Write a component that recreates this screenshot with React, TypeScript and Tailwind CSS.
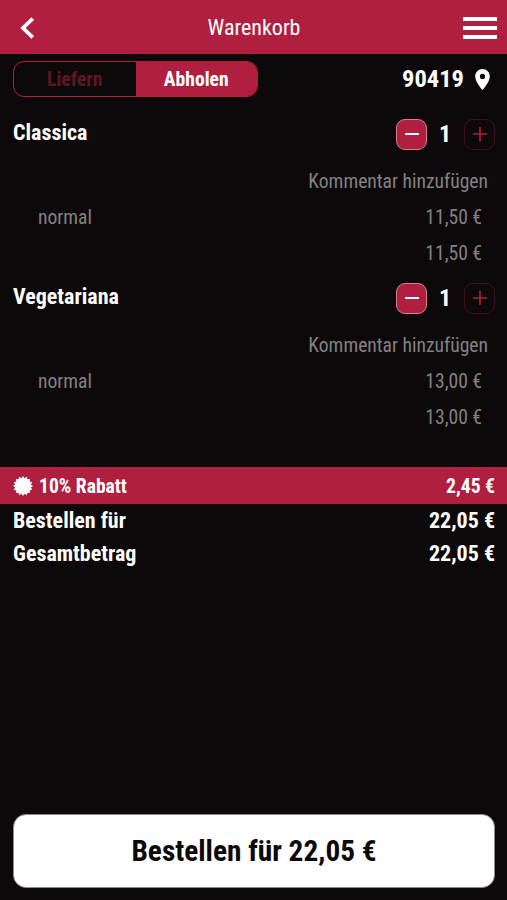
import React, { useState } from "react";
import { MdLocationOn } from "react-icons/md";

type CartItem = {
  id: number;
  name: string;
  size: string;
  count: number;
  price: number;
};

const CART: CartItem[] = [
  { id: 1, name: "Classica", size: "normal", count: 1, price: 11.5 },
  { id: 2, name: "Vegetariana", size: "normal", count: 1, price: 13 },
];

const DISCOUNT = 0.1;

const euro = (value: number) => `${value.toFixed(2).replace(".", ",")} €`;

// Zacken des Rabatt-Siegels
const sealPoints = Array.from({ length: 32 }, (_, i) => {
  const r = i % 2 === 0 ? 10 : 8;
  const a = (Math.PI * i) / 16;
  return `${(10 + r * Math.sin(a)).toFixed(2)},${(10 - r * Math.cos(a)).toFixed(2)}`;
}).join(" ");

function Header() {
  return (
    <header className="h-[54px] shrink-0 bg-[#b11f40] flex items-center pl-5 pr-[10px]">
      <button aria-label="Zurück" className="w-[34px] pt-0.5">
        <svg width="14" height="22" viewBox="0 0 14 22" fill="none" stroke="currentColor" strokeWidth="3.8">
          <path d="M12.8 1.5 3 11l9.8 9.5" />
        </svg>
      </button>
      <h1 className="flex-1 pr-[9px] text-center text-[22px] leading-none font-normal pt-px">Warenkorb</h1>
      <button aria-label="Menü" className="w-[34px] flex flex-col gap-[5px] pt-0.5">
        <span className="h-1 bg-white" />
        <span className="h-1 bg-white" />
        <span className="h-1 bg-white" />
      </button>
    </header>
  );
}

function CartRow({ item }: { item: CartItem }) {
  return (
    <section className="h-[164px] text-[19.6px] text-[#838182]">
      <div className="flex items-center h-9 mb-[11px] pl-[13px] pr-3">
        <h2 className="flex-1 text-[22px] leading-none font-bold text-white pb-0.5">{item.name}</h2>
        <button aria-label="Weniger" className="size-[31px] rounded-[9px] bg-[#b11f40] border border-[#d27c8e] text-white flex items-center justify-center">
          <svg width="14" height="14" viewBox="0 0 14 14" stroke="currentColor" strokeWidth="2">
            <path d="M0 7h14" />
          </svg>
        </button>
        <span className="w-[37px] text-center text-[24px] leading-none font-bold text-white pr-px">{item.count}</span>
        <button aria-label="Mehr" className="size-[31px] rounded-[9px] border border-[#3d101b] text-[#b11f40] flex items-center justify-center">
          <svg width="14" height="14" viewBox="0 0 14 14" stroke="currentColor" strokeWidth="1.6">
            <path d="M0 7h14M7 0v14" />
          </svg>
        </button>
      </div>
      <p className="h-9 leading-[38px] text-right pr-[19px]">Kommentar hinzufügen</p>
      <div className="h-9 leading-[38px] flex justify-between pl-[38px] pr-[25px]">
        <span>{item.size}</span>
        <span>{euro(item.price)}</span>
      </div>
      <p className="h-9 leading-[38px] text-right pr-[25px]">{euro(item.price * item.count)}</p>
    </section>
  );
}

export default function App() {
  const [mode, setMode] = useState<"liefern" | "abholen">("abholen");

  const sum = CART.reduce((acc, item) => acc + item.price * item.count, 0);
  const discount = sum * DISCOUNT;
  const total = sum - discount;

  const tab = (active: boolean) =>
    active ? "flex-1 pt-0.5 bg-[#b11f40] text-white" : "flex-1 pt-0.5 text-[#5d1628]";

  return (
    <div className="h-screen flex flex-col overflow-hidden bg-[#0d090a] text-white font-['Roboto_Condensed','Roboto',sans-serif] [font-stretch:75%]">
      <Header />

      <div className="flex items-center justify-between mt-[7px] pl-[13px] pr-3">
        <div className="flex w-[245px] h-9 rounded-[11px] border border-[#b11f40] overflow-hidden text-[19.6px] leading-none font-bold">
          <button onClick={() => setMode("liefern")} className={tab(mode === "liefern")}>Liefern</button>
          <button onClick={() => setMode("abholen")} className={tab(mode === "abholen")}>Abholen</button>
        </div>
        <div className="flex items-center gap-[6px] text-[24.5px] leading-none font-bold">
          90419
          <MdLocationOn className="size-[25px]" />
        </div>
      </div>

      <main className="mt-[19px] h-[351px]">
        {CART.map((item) => (
          <CartRow key={item.id} item={item} />
        ))}
      </main>

      <div className="h-[37px] flex items-center bg-[#b11f40] pl-[13px] pr-3 text-[19.6px] leading-none font-bold">
        <svg width="20" height="20" viewBox="0 0 20 20" fill="currentColor" className="mr-[6px]">
          <polygon points={sealPoints} />
        </svg>
        <span className="flex-1 pt-0.5">10% Rabatt</span>
        <span className="pt-0.5">{euro(discount)}</span>
      </div>
      <div className="h-[33px] flex items-center justify-between pl-[13px] pr-3 text-[22px] leading-none font-bold">
        <span>Bestellen für</span>
        <span>{euro(total)}</span>
      </div>
      <div className="h-[33px] flex items-center justify-between pl-[13px] pr-3 text-[22px] leading-none font-bold">
        <span>Gesamtbetrag</span>
        <span>{euro(total)}</span>
      </div>

      <button className="mt-auto mb-3 ml-[13px] mr-3 h-[74px] shrink-0 rounded-[13px] bg-white border border-[#8d8a8b] text-[#0d090a] text-[29.3px] leading-none font-bold pt-0.5">
        Bestellen für {euro(total)}
      </button>
    </div>
  );
}
